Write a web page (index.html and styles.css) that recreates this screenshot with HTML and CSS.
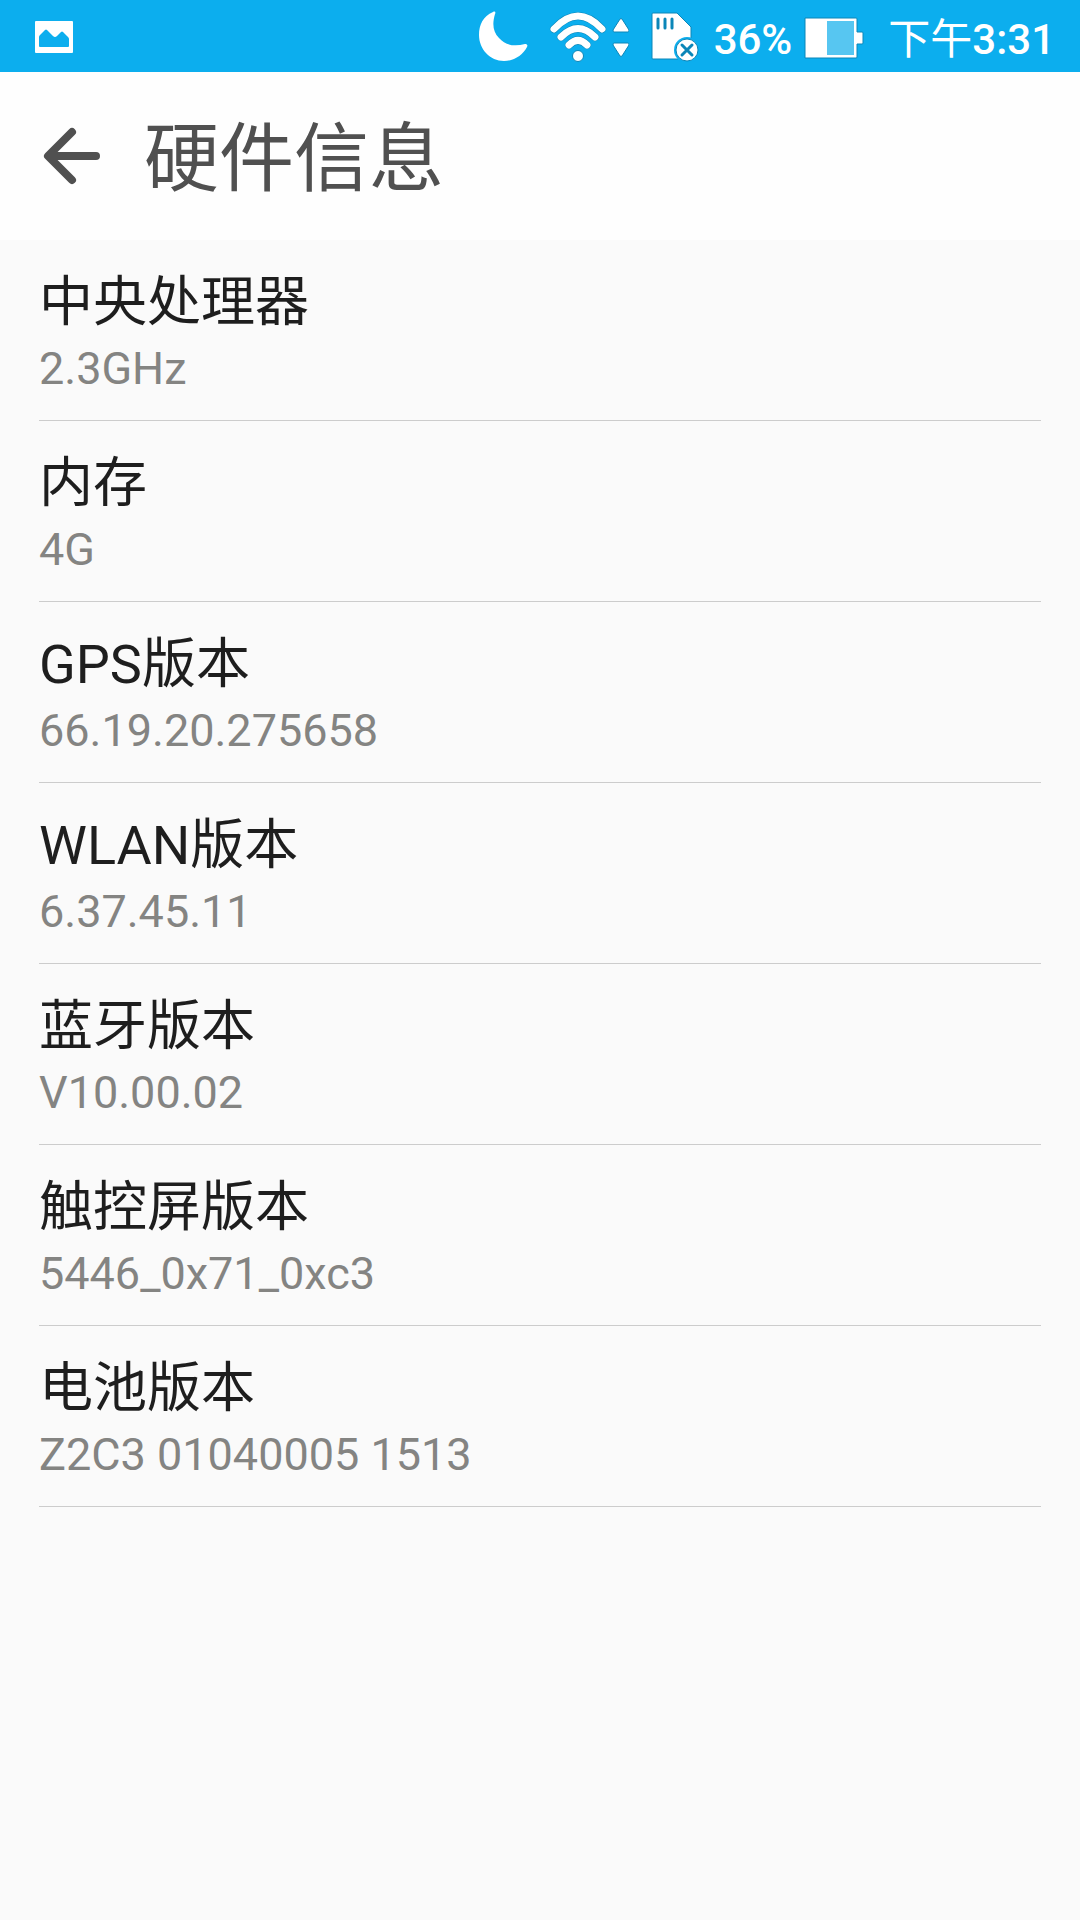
FILE: index.html
```html
<!DOCTYPE html>
<html lang="zh-CN">

<head>
    <meta charset="UTF-8">
    <meta name="viewport" content="width=device-width">
    <title>硬件信息</title>
    <link rel="stylesheet" href="styles.css">
</head>

<body>
    <div class="status-bar">
        <svg class="notification" width="40" height="34" viewBox="0 0 40 34" aria-hidden="true">
            <path fill="#fff" fill-rule="evenodd" d="M2 1h36q1 0 1 1v30q0 1-1 1H2q-1 0-1-1V2q0-1 1-1zM5 17v9q0 1 1 1h28q1 0 1-1v-7q0-1-1-2l-5-5q-1-1-2 0l-4 4q-2 2-4 0l-6-6q-1-1-2 0l-5 5q-1 1-1 2z" />
        </svg>
        <div class="status-icons">
            <svg width="50" height="52" viewBox="0 0 50 52" aria-hidden="true">
                <path fill="#fff" d="M15 2C5 6 1 15 1 25c0 14 11 26 25 26 10 0 19-6 23-14 1-2 0-3-2-3-11 3-20 1-26-6-6-6-7-14-4-24 1-2 0-3-2-2z" />
            </svg>
            <svg class="wifi" width="80" height="52" viewBox="0 0 80 52" aria-hidden="true">
                <g fill="none" stroke-linecap="round">
                    <g stroke="#0b86b8" stroke-width="8">
                        <path d="M5 19q24-26 48 0M12 27q17-17 34 0M20 35q9-9 18 0" />
                    </g>
                    <g stroke="#fff" stroke-width="7">
                        <path d="M5 19q24-26 48 0M12 27q17-17 34 0M20 35q9-9 18 0" />
                    </g>
                </g>
                <circle cx="29" cy="46" r="5.5" fill="#fff" stroke="#0b86b8" />
                <path fill="#fff" stroke="#0b86b8" d="M71 9q1-1 2 0l7 11q0 2-1 2H65q-1 0-1-2zM65 33h14q1 0 1 2l-7 11q-1 1-2 0l-7-11q0-2 1-2z" />
            </svg>
            <svg class="sim" width="50" height="52" viewBox="0 0 50 52" aria-hidden="true">
                <path fill="#fff" stroke="#0b86b8" d="M2 3h24l14 14v32H2q-1 0-1-1V4q0-1 1-1z" />
                <path stroke="#0b86b8" stroke-width="3" stroke-linecap="round" d="M7 9v9M14 9v9M21 9v9" />
                <circle cx="36" cy="40" r="13" fill="#0caeee" />
                <circle cx="36" cy="40" r="11" fill="#fff" stroke="#0b86b8" />
                <path stroke="#0b86b8" stroke-width="3" stroke-linecap="round" d="M31 35l10 10M41 35L31 45" />
            </svg>
            <span class="percent">36%</span>
            <svg class="battery" width="60" height="42" viewBox="0 0 60 42" aria-hidden="true">
                <path fill="#fff" stroke="#0b86b8" d="M1 1h51q1 0 1 1v13h5q1 0 1 1v10q0 1-1 1h-5v13q0 1-1 1H1z" />
                <path fill="#57c6f1" d="M23 4h27v34H23z" />
            </svg>
            <time class="clock"><span class="period">下午</span>3:31</time>
        </div>
    </div>

    <header class="title-bar">
        <button class="back" type="button" aria-label="返回">
            <svg width="58" height="58" viewBox="0 0 58 58" aria-hidden="true">
                <path fill="none" stroke="#505050" stroke-width="8" stroke-linecap="round" stroke-linejoin="round" d="M29 5L5 29l24 24M6 29h47" />
            </svg>
        </button>
        <h1>硬件信息</h1>
    </header>

    <main>
        <dl class="info-list">
            <div class="info">
                <dt>中央处理器</dt>
                <dd>2.3GHz</dd>
            </div>
            <div class="info">
                <dt>内存</dt>
                <dd>4G</dd>
            </div>
            <div class="info">
                <dt>GPS版本</dt>
                <dd>66.19.20.275658</dd>
            </div>
            <div class="info">
                <dt>WLAN版本</dt>
                <dd>6.37.45.11</dd>
            </div>
            <div class="info">
                <dt>蓝牙版本</dt>
                <dd>V10.00.02</dd>
            </div>
            <div class="info">
                <dt>触控屏版本</dt>
                <dd>5446_0x71_0xc3</dd>
            </div>
            <div class="info">
                <dt>电池版本</dt>
                <dd>Z2C3 01040005 1513</dd>
            </div>
        </dl>
    </main>
</body>

</html>
```
FILE: styles.css
```css
* {
    box-sizing: border-box;
}

body {
    margin: 0;
    background-color: #fafafa;
    color: #1e1e1e;
    font-family: Roboto, "Noto Sans CJK SC", sans-serif;
}

svg {
    display: block;
    flex: none;
}

.status-bar {
    display: flex;
    align-items: center;
    justify-content: space-between;
    height: 72px;
    padding: 0 25px 0 34px;
    background-color: #0caeee;
    color: #fff;
    font-size: 42px;
    line-height: 52px;
}

.notification {
    margin-top: 2px;
}

.status-icons {
    display: flex;
    align-items: center;
    white-space: nowrap;
}

.wifi {
    margin-left: 21px;
}

.sim {
    margin-left: 22px;
}

.percent {
    margin-left: 13px;
    padding-top: 8px;
    font-weight: 500;
}

.battery {
    margin-top: 4px;
    margin-left: 12px;
}

.clock {
    margin-left: 24px;
    padding-top: 8px;
    font-weight: 500;
}

.period {
    font-weight: 400;
}

.title-bar {
    display: flex;
    align-items: center;
    height: 168px;
    padding: 0 43px;
    background-color: #fefefe;
    color: #505050;
}

.back {
    padding: 0;
    border: 0;
    background: none;
    cursor: pointer;
}

h1 {
    margin: 0 0 0 43px;
    padding-top: 6px;
    font-size: 75px;
    font-weight: 400;
    line-height: 90px;
}

.info-list {
    margin: 0;
    padding: 0 39px;
}

.info {
    padding: 31px 0 21px;
    border-bottom: 1px solid #cccccc;
}

dt {
    font-size: 54px;
    line-height: 64px;
}

dd {
    margin: 4px 0 0;
    color: #848482;
    font-size: 45px;
    line-height: 60px;
}
```
